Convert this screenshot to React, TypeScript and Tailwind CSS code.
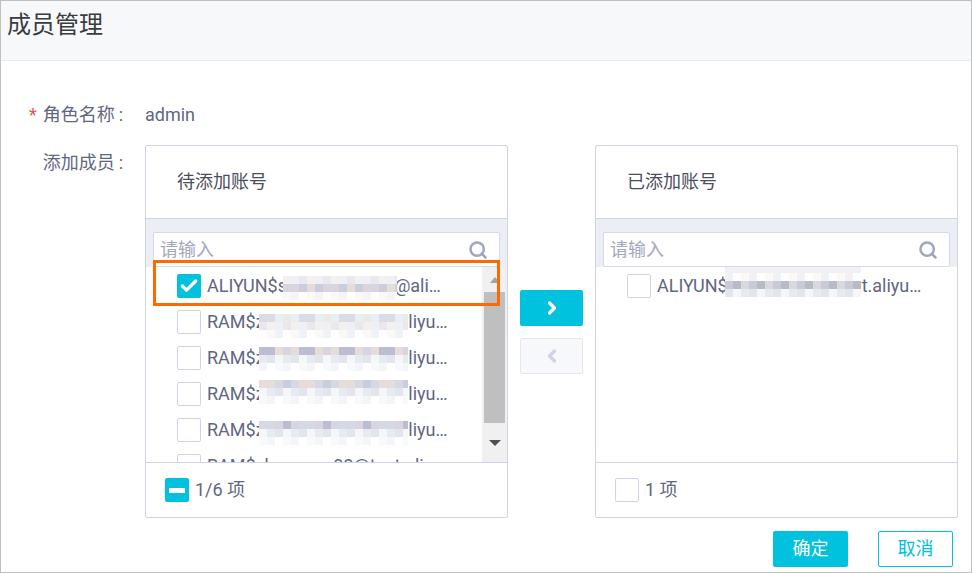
import { Check, ChevronLeft, ChevronRight, Search } from "lucide-react";

type Blur = { left: number; top: number; width: number; rows: string[][] };
type Item = { text: string; checked: boolean; blur: Blur | null; widthClass: string };

const tints = ["#c9cddc", "#dcdbe4", "#e6dcd9", "#ccd6e2", "#d8d4e0", "#e4e6ec", "#bcbdd2", "#e9eef0", "#d5d9e4", "#efe9e6"];
const faint = ["#ffffff", "#f8f9fb", "#f1f2f6", "#ffffff", "#fbf8f7", "#f4f5f8"];
const soft = ["#eef0f5", "#e3e5ec", "#f3f1f0", "#e6ebf2", "#eae7ee", "#f5f6f8"];
const grays = ["#c4c5d0", "#b8bac8", "#d0d1da", "#c9cad6", "#bfc1cd", "#d8d9e0"];

function pick(list: string[], cols: number, seed: number) {
  return Array.from({ length: cols }, (_, i) => list[(i * i * 3 + i * 7 + seed) % list.length]);
}

function ramBlur(seed: number, top: number): Blur {
  return {
    left: 82,
    top,
    width: 149,
    rows: [pick(tints, 19, seed), pick(soft, 19, seed + 3), pick(faint, 19, seed + 5)],
  };
}

const ramText = "RAM$zxxxxxxxxxxxxxxxaliyunid.com";

const leftItems: Item[] = [
  {
    text: "ALIYUN$sxxxxxxxxxxxx@aliyun.com",
    checked: true,
    widthClass: "w-[240px]",
    blur: {
      left: 106,
      top: 8,
      width: 114,
      rows: [pick(soft, 15, 2), pick(tints, 15, 4), pick(faint, 15, 1)],
    },
  },
  { text: ramText, checked: false, widthClass: "w-[243px]", blur: ramBlur(1, 10) },
  { text: ramText, checked: false, widthClass: "w-[243px]", blur: ramBlur(6, 7) },
  { text: ramText, checked: false, widthClass: "w-[243px]", blur: ramBlur(2, 4) },
  { text: ramText, checked: false, widthClass: "w-[243px]", blur: ramBlur(8, 9) },
  { text: "RAM$zhangsan03@test.aliyunid.com", checked: false, widthClass: "w-[243px]", blur: null },
];

const rightItems: Item[] = [
  {
    text: "ALIYUN$xxxxxxxxxxxxxxxt.aliyunid.com",
    checked: false,
    widthClass: "w-[270px]",
    blur: {
      left: 98,
      top: -3,
      width: 136,
      rows: [pick(["#f0f1f6"], 17, 0), pick(faint, 17, 2), pick(grays, 17, 3), pick(soft, 17, 1)],
    },
  },
];

function Mosaic({ blur }: { blur: Blur }) {
  return (
    <div className="absolute flex flex-col overflow-hidden" style={{ left: blur.left, top: blur.top, width: blur.width }}>
      {blur.rows.map((row, r) => (
        <div key={r} className="flex">
          {row.map((color, c) => (
            <div key={c} className="w-2 h-2 shrink-0" style={{ backgroundColor: color }} />
          ))}
        </div>
      ))}
    </div>
  );
}

function Box({ state }: { state?: "checked" | "partial" }) {
  if (state === "checked") {
    return (
      <span className="w-6 h-6 shrink-0 rounded-[2px] bg-[#00c1de] flex items-center justify-center">
        <Check size={20} strokeWidth={4} className="text-white" />
      </span>
    );
  }
  if (state === "partial") {
    return (
      <span className="w-6 h-6 shrink-0 rounded-[2px] bg-[#00c1de] flex items-center justify-center">
        <span className="w-4 h-[5px] bg-white" />
      </span>
    );
  }
  return <span className="w-6 h-6 shrink-0 rounded-[2px] border border-[#d0d3e6] bg-white" />;
}

function Scrollbar() {
  return (
    <div className="w-[25px] shrink-0 bg-[#f0f0f0] flex flex-col items-center">
      <div className="h-[25px] flex items-center justify-center">
        <span className="w-0 h-0 border-x-[5px] border-x-transparent border-b-[6px] border-b-[#a3a3a3]" />
      </div>
      <div className="w-[21px] h-[131px] bg-[#bfbfbf]" />
      <div className="flex-1 flex items-center justify-center">
        <span className="w-0 h-0 border-x-[6px] border-x-transparent border-t-[6px] border-t-[#505050]" />
      </div>
    </div>
  );
}

function TransferPanel({
  title,
  items,
  footer,
  footerState,
  scroll,
  highlight,
}: {
  title: string;
  items: Item[];
  footer: string;
  footerState?: "partial";
  scroll?: boolean;
  highlight?: boolean;
}) {
  return (
    <div className="relative w-[363px] h-[373px] shrink-0 border border-[#d0d3e6] rounded-[2px] bg-white flex flex-col">
      <div className="h-[73px] shrink-0 border-b border-[#d0d3e6] flex items-center pl-[31px] text-[#4a4d5e]">
        {title}
      </div>
      <div className="shrink-0 bg-[#ebeef5] pt-[13px] px-[7px]">
        <div className="h-[35px] bg-white border border-[#d7d9e8] rounded-[2px] flex items-center justify-between pl-1.5 pr-[11px]">
          <span className="text-[#a4a7c0]">请输入</span>
          <Search size={20} strokeWidth={3} className="text-[#a2a5bf]" />
        </div>
      </div>
      <div className="flex-1 min-h-0 flex overflow-hidden">
        <div className="flex-1 min-w-0 pl-[31px] pt-px">
          {items.map((item, i) => (
            <div key={i} className="relative h-9 flex items-center">
              <Box state={item.checked ? "checked" : undefined} />
              <span className={`ml-1.5 truncate text-[#62667f] ${item.widthClass}`}>{item.text}</span>
              {item.blur && <Mosaic blur={item.blur} />}
            </div>
          ))}
        </div>
        {scroll && <Scrollbar />}
      </div>
      <div className="h-[55px] shrink-0 border-t border-[#d0d3e6] flex items-center pl-[19px]">
        <Box state={footerState} />
        <span className="ml-1.5 text-[#62667f]">{footer}</span>
      </div>
      {highlight && (
        <div className="absolute left-[7px] top-[114px] w-[347px] h-[46px] border-[3px] border-[#ff6a00]" />
      )}
    </div>
  );
}

export default function App() {
  return (
    <div className="w-[972px] h-[573px] overflow-hidden border border-[#bfbfbf] bg-white flex flex-col text-[18px] leading-6 font-['Roboto','Noto_Sans_CJK_SC',sans-serif]">
      <div className="h-[60px] shrink-0 bg-[#f7f8fa] border-b border-[#e8e9ee] pl-1.5 pt-2 text-2xl leading-8 text-[#373d41]">
        成员管理
      </div>

      <div className="pt-[42px]">
        <div className="flex items-center">
          <div className="w-[122px] shrink-0 flex justify-end text-[#62667f]">
            <span className="text-[#f25050] mr-1.5">*</span>
            角色名称<span className="ml-1">:</span>
          </div>
          <span className="ml-[22px] text-[#62667f]">admin</span>
        </div>

        <div className="flex mt-[18px]">
          <div className="w-[122px] shrink-0 pt-1.5 flex justify-end text-[#62667f]">
            添加成员<span className="ml-1">:</span>
          </div>
          <div className="ml-[22px] flex">
            <TransferPanel
              title="待添加账号"
              items={leftItems}
              footer="1/6 项"
              footerState="partial"
              scroll
              highlight
            />
            <div className="w-[87px] shrink-0 flex flex-col items-center justify-center gap-3">
              <button className="w-[63px] h-9 rounded-[2px] bg-[#00c1de] flex items-center justify-center">
                <ChevronRight size={20} strokeWidth={4} className="text-white" />
              </button>
              <button className="w-[63px] h-9 rounded-[2px] bg-[#f7f8fa] border border-[#e6e7ee] flex items-center justify-center">
                <ChevronLeft size={20} strokeWidth={4} className="text-[#d0d3e6]" />
              </button>
            </div>
            <TransferPanel title="已添加账号" items={rightItems} footer="1 项" />
          </div>
        </div>

        <div className="flex justify-end gap-[30px] pr-[18px] mt-[13px]">
          <button className="w-[75px] h-9 rounded-[2px] bg-[#00c1de] text-white">确定</button>
          <button className="w-[75px] h-9 rounded-[2px] border border-[#00c1de] text-[#00c1de]">取消</button>
        </div>
      </div>
    </div>
  );
}
